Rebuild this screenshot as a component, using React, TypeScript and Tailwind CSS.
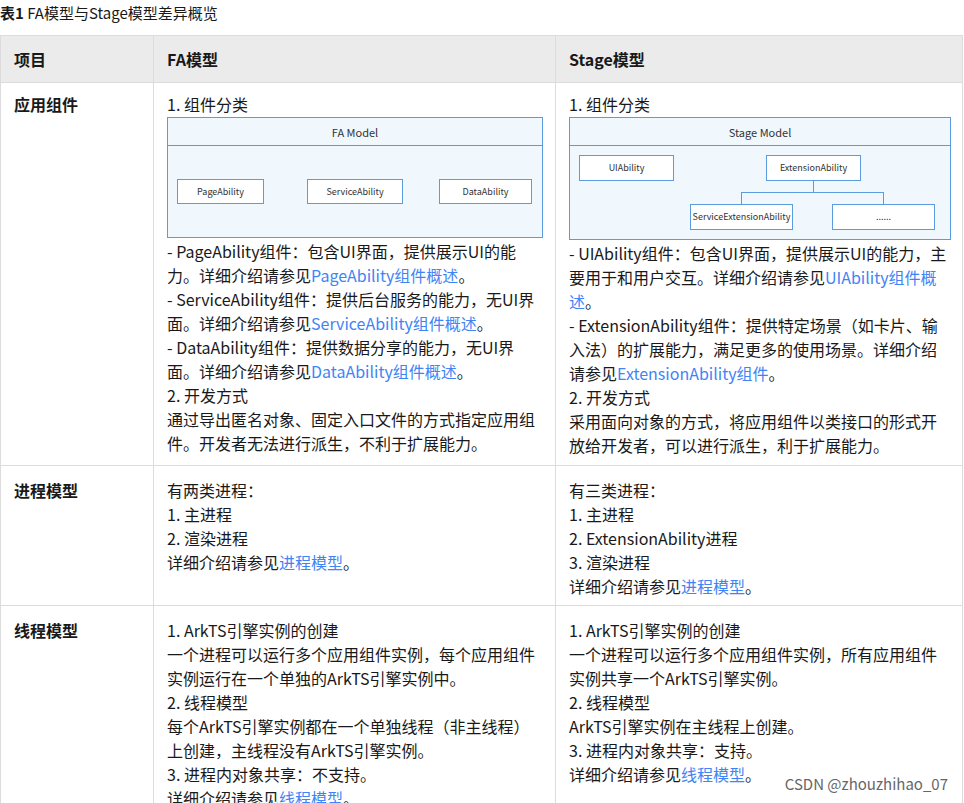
import React from "react";

const L = ({ children }: { children: React.ReactNode }) => <span className="text-[#3f84f5]">{children}</span>;

const Box = ({ x, y, w, h, t }: { x: number; y: number; w: number; h: number; t: string }) => (
  <div className="absolute bg-white border border-[#5b9be0] flex items-center justify-center text-[9px] text-[#333]" style={{ left: x, top: y, width: w, height: h }}>{t}</div>
);

function FADiagram() {
  return (
    <div className="relative w-[376px] h-[121px] border border-[#5b9be0] bg-[#f1f8fd] my-[1px]">
      <div className="h-[28px] border-b border-[#5b9be0] flex items-center justify-center text-[11px] text-[#333]">FA Model</div>
      <Box x={9} y={61} w={87} h={25} t="PageAbility" />
      <Box x={139} y={61} w={96} h={25} t="ServiceAbility" />
      <Box x={271} y={61} w={93} h={25} t="DataAbility" />
    </div>
  );
}

function StageDiagram() {
  return (
    <div className="relative w-[382px] h-[123px] border border-[#5b9be0] bg-[#f1f8fd] my-[1px]">
      <div className="h-[28px] border-b border-[#5b9be0] flex items-center justify-center text-[11px] text-[#333]">Stage Model</div>
      <Box x={9} y={37} w={95} h={26} t="UIAbility" />
      <Box x={196} y={37} w={95} h={26} t="ExtensionAbility" />
      <div className="absolute bg-[#5b9be0] w-px" style={{ left: 243, top: 63, height: 12 }} />
      <div className="absolute bg-[#5b9be0] h-px" style={{ left: 171, top: 74, width: 143 }} />
      <div className="absolute bg-[#5b9be0] w-px" style={{ left: 171, top: 74, height: 13 }} />
      <div className="absolute bg-[#5b9be0] w-px" style={{ left: 313, top: 74, height: 13 }} />
      <Box x={120} y={86} w={103} h={26} t="ServiceExtensionAbility" />
      <Box x={262} y={86} w={103} h={26} t="......" />
    </div>
  );
}

export default function App() {
  const base = "border border-[#dcdcdc] px-[13px] text-[16px] leading-[24px] text-[#191919]";
  const cell = base + " align-top";
  const head = base + " align-middle font-bold";
  return (
    <div className="relative w-[964px] h-[803px] overflow-hidden bg-white" style={{ fontFamily: '"Noto Sans CJK SC", "Noto Sans", sans-serif' }}>
      <div className="h-[35px] pt-[1px] text-[15px] leading-[24px] text-[#191919]"><b>表1</b> FA模型与Stage模型差异概览</div>
      <table className="border-collapse w-[963px] table-fixed">
        <colgroup><col className="w-[153px]" /><col className="w-[402px]" /><col /></colgroup>
        <tbody>
          <tr className="bg-[#ebebeb] h-[47px]">
            <td className={head}>项目</td>
            <td className={head}>FA模型</td>
            <td className={head}>Stage模型</td>
          </tr>
          <tr className="h-[383px]">
            <td className={cell + " font-bold pt-[9px]"}>应用组件</td>
            <td className={cell + " pt-[9px]"}>
              1. 组件分类<FADiagram />
              - PageAbility组件：包含UI界面，提供展示UI的能<br />力。详细介绍请参见<L>PageAbility组件概述</L>。<br />
              - ServiceAbility组件：提供后台服务的能力，无UI界<br />面。详细介绍请参见<L>ServiceAbility组件概述</L>。<br />
              - DataAbility组件：提供数据分享的能力，无UI界<br />面。详细介绍请参见<L>DataAbility组件概述</L>。<br />
              2. 开发方式<br />通过导出匿名对象、固定入口文件的方式指定应用组<br />件。开发者无法进行派生，不利于扩展能力。
            </td>
            <td className={cell + " pt-[9px]"}>
              1. 组件分类<StageDiagram />
              - UIAbility组件：包含UI界面，提供展示UI的能力，主<br />要用于和用户交互。详细介绍请参见<L>UIAbility组件概<br />述</L>。<br />
              - ExtensionAbility组件：提供特定场景（如卡片、输<br />入法）的扩展能力，满足更多的使用场景。详细介绍<br />请参见<L>ExtensionAbility组件</L>。<br />
              2. 开发方式<br />采用面向对象的方式，将应用组件以类接口的形式开<br />放给开发者，可以进行派生，利于扩展能力。
            </td>
          </tr>
          <tr className="h-[140px]">
            <td className={cell + " font-bold pt-[12px]"}>进程模型</td>
            <td className={cell + " pt-[12px]"}>有两类进程：<br />1. 主进程<br />2. 渲染进程<br />详细介绍请参见<L>进程模型</L>。</td>
            <td className={cell + " pt-[12px]"}>有三类进程：<br />1. 主进程<br />2. ExtensionAbility进程<br />3. 渲染进程<br />详细介绍请参见<L>进程模型</L>。</td>
          </tr>
          <tr>
            <td className={cell + " font-bold pt-[12px]"}>线程模型</td>
            <td className={cell + " pt-[12px]"}>1. ArkTS引擎实例的创建<br />一个进程可以运行多个应用组件实例，每个应用组件<br />实例运行在一个单独的ArkTS引擎实例中。<br />2. 线程模型<br />每个ArkTS引擎实例都在一个单独线程（非主线程）<br />上创建，主线程没有ArkTS引擎实例。<br />3. 进程内对象共享：不支持。<br />详细介绍请参见<L>线程模型</L>。</td>
            <td className={cell + " pt-[12px]"}>1. ArkTS引擎实例的创建<br />一个进程可以运行多个应用组件实例，所有应用组件<br />实例共享一个ArkTS引擎实例。<br />2. 线程模型<br />ArkTS引擎实例在主线程上创建。<br />3. 进程内对象共享：支持。<br />详细介绍请参见<L>线程模型</L>。</td>
          </tr>
        </tbody>
      </table>
      <div className="absolute right-[16px] bottom-[8px] text-[15px] text-[#666] bg-white/70">CSDN @zhouzhihao_07</div>
    </div>
  );
}
